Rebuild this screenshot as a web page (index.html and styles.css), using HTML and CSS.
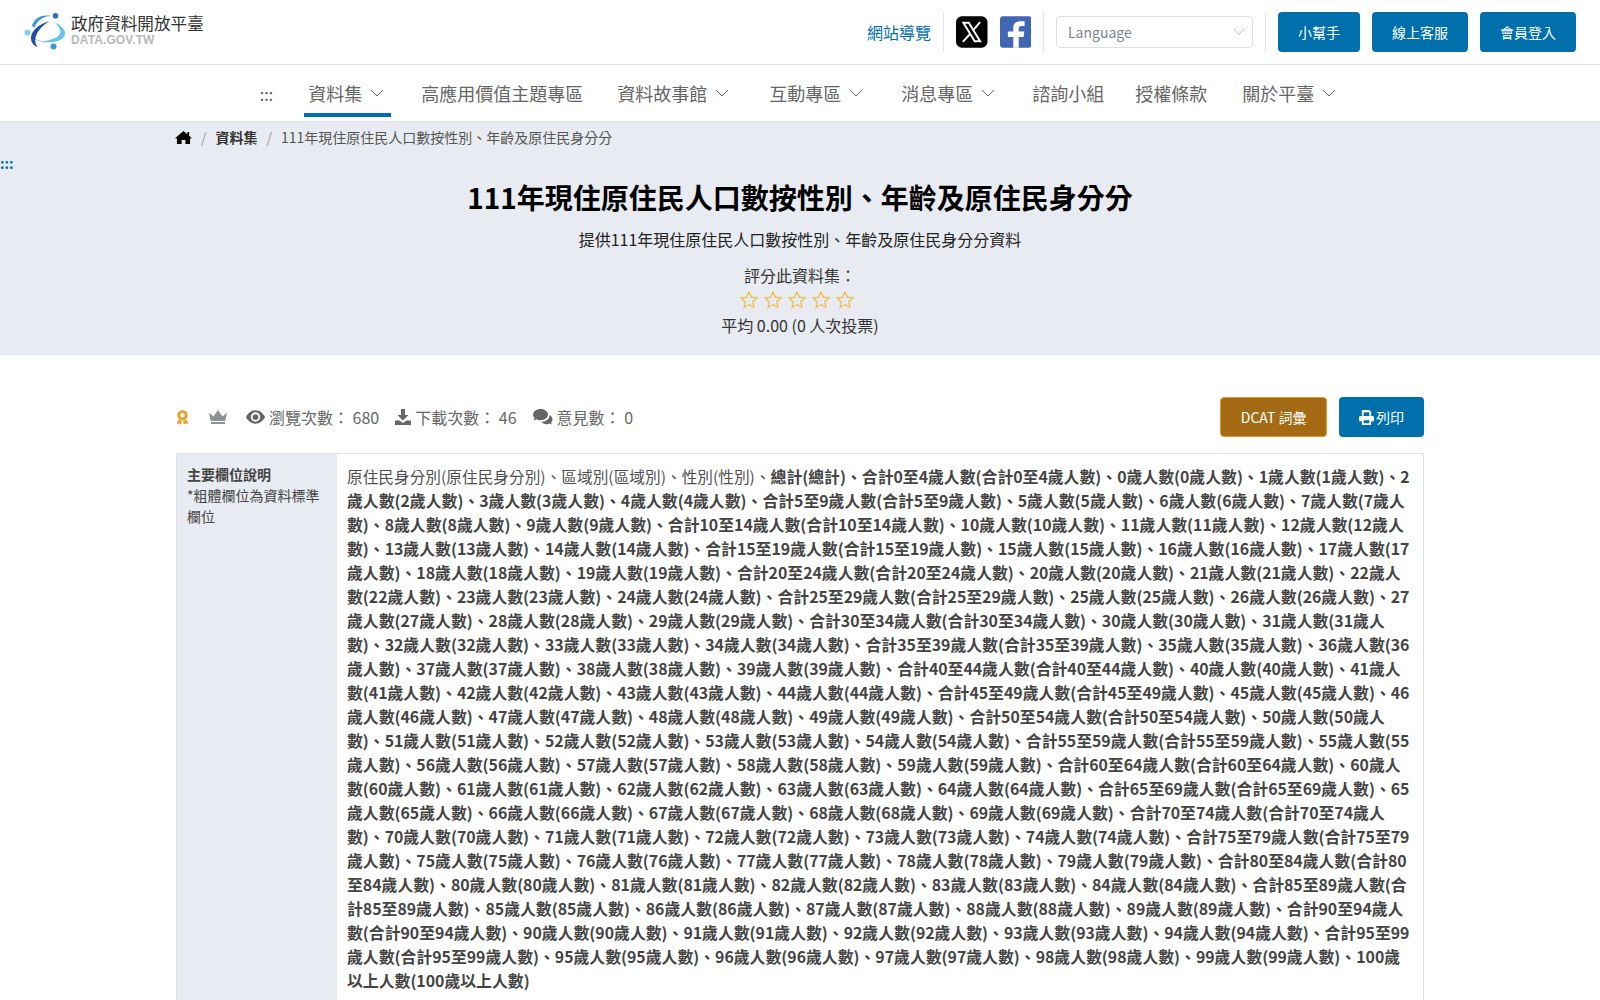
FILE: index.html

```html
<!DOCTYPE html>
<html lang="zh-Hant">
<head>
  <meta charset="UTF-8">
  <meta name="viewport" content="width=device-width, initial-scale=1.0">
  <title>111年現住原住民人口數按性別、年齡及原住民身分分</title>
  <link rel="stylesheet" href="styles.css">
</head>
<body>

  <header class="topbar">
    <a class="logo" href="#">
      <svg class="logo-mark" viewBox="0 0 42 38" width="42" height="38">
        <path d="M30 9C37 12 41.500 17 41 21 40 28 28 31 15 28.500 25 28 36 25 36.500 19 36.500 15 33.500 12 30 9z" fill="#62c6ea"/>
        <path d="M6 23c5 3.500 11 5 17 5.500-7 .5-13-1-17-5.500z" fill="#8ed8f0"/>
        <path d="M25.500 8C15 11 7 18 7 25c0 5 3 8 7 9-3-3-3.500-7-2-11C14 17 19 12 25.500 8z" fill="#1f4ea3"/>
        <path d="M8 13C10 6 16 1 27 3 21 3 14 6 10.500 14.500z" fill="#3a9ad9"/>
        <circle cx="31.500" cy="2.800" r="2.800" fill="#2f6fb8"/>
        <circle cx="3.500" cy="19.500" r="3" fill="#7fd0ee"/>
        <circle cx="29.500" cy="33.500" r="3" fill="#3a9ad9"/>
      </svg>
      <span class="logo-text">
        <span class="logo-name">政府資料開放平臺</span>
        <span class="logo-en">DATA.GOV.TW</span>
      </span>
    </a>
    <div class="top-tools">
      <a class="site-map" href="#">網站導覽</a>
      <span class="sep"></span>
      <a class="social" href="#">
        <svg viewBox="0 0 32 32" width="32" height="32">
          <rect width="32" height="32" rx="6" fill="#000"/>
          <path d="M7.500 6.500h5.500l11.500 19H19z" fill="none" stroke="#fff" stroke-width="2"/>
          <path d="M24.500 6 17 14.600M14.800 17.400 7 26" stroke="#fff" stroke-width="2" fill="none"/>
        </svg>
      </a>
      <a class="social" href="#">
        <svg viewBox="0 0 32 32" width="32" height="32">
          <rect width="32" height="32" rx="3" fill="#4267b2"/>
          <path d="M19 32V21h5l.7-5.500H19v-3c0-1.500.7-2.500 2.700-2.500H25V5.200C24.300 5.100 22.800 5 21.300 5 16.600 5 13.500 7.200 13.500 11.400v4.100H8V21h5.500v11z" fill="#fff"/>
        </svg>
      </a>
      <span class="sep"></span>
      <div class="lang">
        <span>Language</span>
        <svg viewBox="0 0 12 8" width="12" height="8"><path d="M1 1l5 5.500L11 1" fill="none" stroke="#b9bdc6" stroke-width="1"/></svg>
      </div>
      <span class="sep"></span>
      <a class="btn" href="#">小幫手</a>
      <a class="btn" href="#">線上客服</a>
      <a class="btn" href="#">會員登入</a>
    </div>
  </header>

  <nav class="mainnav">
    <span class="nav-dots">:::</span>
    <a class="nav-item has-sub active" href="#">資料集<svg class="chev" viewBox="0 0 14 8" width="14" height="8"><path d="M1 1l6 6 6-6" fill="none" stroke="#666" stroke-width="1"/></svg></a>
    <a class="nav-item" href="#">高應用價值主題專區</a>
    <a class="nav-item has-sub nav-story" href="#">資料故事館<svg class="chev" viewBox="0 0 14 8" width="14" height="8"><path d="M1 1l6 6 6-6" fill="none" stroke="#666" stroke-width="1"/></svg></a>
    <a class="nav-item has-sub" href="#">互動專區<svg class="chev" viewBox="0 0 14 8" width="14" height="8"><path d="M1 1l6 6 6-6" fill="none" stroke="#666" stroke-width="1"/></svg></a>
    <a class="nav-item has-sub nav-news" href="#">消息專區<svg class="chev" viewBox="0 0 14 8" width="14" height="8"><path d="M1 1l6 6 6-6" fill="none" stroke="#666" stroke-width="1"/></svg></a>
    <a class="nav-item nav-consult" href="#">諮詢小組</a>
    <a class="nav-item nav-terms" href="#">授權條款</a>
    <a class="nav-item has-sub" href="#">關於平臺<svg class="chev" viewBox="0 0 14 8" width="14" height="8"><path d="M1 1l6 6 6-6" fill="none" stroke="#666" stroke-width="1"/></svg></a>
  </nav>

  <section class="hero">
    <div class="crumbs">
      <svg class="crumb-home" viewBox="0 0 576 512" width="17" height="15"><path fill="#000" d="M288 32 8 272l24 28 32-27v207h160V340h128v140h160V273l32 27 24-28-88-75V64h-64v78z"/></svg>
      <span class="crumb-sep">/</span>
      <b>資料集</b>
      <span class="crumb-sep">/</span>
      <span>111年現住原住民人口數按性別、年齡及原住民身分分</span>
    </div>
    <div class="hero-dots">:::</div>
    <h1>111年現住原住民人口數按性別、年齡及原住民身分分</h1>
    <p class="hero-desc">提供111年現住原住民人口數按性別、年齡及原住民身分分資料</p>
    <p class="rate-label">評分此資料集：</p>
    <div class="stars">
      <svg viewBox="0 0 20 20" width="20" height="20"><path class="star" d="M10 2l2.400 5.200 5.600.7-4.100 3.900 1.100 5.600-5-2.800-5 2.800 1.100-5.600L2 7.900l5.600-.7z"/></svg>
      <svg viewBox="0 0 20 20" width="20" height="20"><path class="star" d="M10 2l2.400 5.200 5.600.7-4.100 3.900 1.100 5.600-5-2.800-5 2.800 1.100-5.600L2 7.900l5.600-.7z"/></svg>
      <svg viewBox="0 0 20 20" width="20" height="20"><path class="star" d="M10 2l2.400 5.200 5.600.7-4.100 3.900 1.100 5.600-5-2.800-5 2.800 1.100-5.600L2 7.900l5.600-.7z"/></svg>
      <svg viewBox="0 0 20 20" width="20" height="20"><path class="star" d="M10 2l2.400 5.200 5.600.7-4.100 3.900 1.100 5.600-5-2.800-5 2.800 1.100-5.600L2 7.900l5.600-.7z"/></svg>
      <svg viewBox="0 0 20 20" width="20" height="20"><path class="star" d="M10 2l2.400 5.200 5.600.7-4.100 3.900 1.100 5.600-5-2.800-5 2.800 1.100-5.600L2 7.900l5.600-.7z"/></svg>
    </div>
    <p class="rate-avg">平均 0.00 (0 人次投票)</p>
  </section>

  <main class="content">
    <div class="stats-row">
      <div class="stats">
        <svg class="badge" viewBox="0 0 13 15" width="13" height="15">
          <circle cx="6.500" cy="5.300" r="3.700" fill="none" stroke="#eb9f2e" stroke-width="3"/>
          <path d="M2.500 9.500 .5 14l3-.6 1.500 1.400 1-3zM10.500 9.500l2 4.500-3-.6L8 14.800l-1-3z" fill="#eb9f2e"/>
        </svg>
        <svg class="crown" viewBox="0 0 18 14" width="18" height="14">
          <path d="M0 2.500l4.500 4L9 0l4.500 6.500 4.500-4L16.300 11H1.700zM2 12h14v2H2z" fill="#8c909b"/>
        </svg>
        <span class="stat">
          <svg viewBox="0 0 20 14" width="19" height="14">
            <path d="M10 0C5.500 0 2 3 0 7c2 4 5.500 7 10 7s8-3 10-7c-2-4-5.500-7-10-7zm0 12A5 5 0 1 1 10 2a5 5 0 0 1 0 10z" fill="#666"/>
            <circle cx="10" cy="7" r="3" fill="#666"/>
          </svg>
          瀏覽次數： 680
        </span>
        <span class="stat">
          <svg viewBox="0 0 16 16" width="16" height="16">
            <path d="M6 0h4v6h3.500L8 11.500 2.500 6H6zM0 11.500h4.500L8 14l3.500-2.500H16V16H0z" fill="#666"/>
          </svg>
          下載次數： 46
        </span>
        <span class="stat">
          <svg viewBox="0 0 20 16" width="20" height="16">
            <path d="M7.500 0C3.400 0 0 2.500 0 5.600c0 1.300.6 2.500 1.600 3.500L.4 11.500l3-1.200c1.200.6 2.600.9 4.100.9 4.100 0 7.500-2.500 7.500-5.600S11.600 0 7.500 0z" fill="#666"/>
            <path d="M16.500 5.500c.1.300.1.600.1.900 0 3.700-3.800 6.200-8.200 6.300 1 1.500 3.100 2.500 5.300 2.500 1 0 2-.2 2.800-.6l2.500 1-.9-2.100c.9-.8 1.400-1.800 1.400-3 0-2-1.200-3.500-3-4.400z" fill="#666"/>
          </svg>
          意見數： 0
        </span>
      </div>
      <div class="stats-actions">
        <a class="btn btn-dcat" href="#">DCAT 詞彙</a>
        <a class="btn btn-print" href="#">
          <svg viewBox="0 0 16 16" width="15" height="15">
            <path d="M3 0h8l2 2v4h-2V2.500H5V6H3zM1.500 6.500h13c.8 0 1.500.7 1.500 1.500v4h-3v4H3v-4H0V8c0-.8.700-1.500 1.500-1.500zM5 11v3h6v-3z" fill="#fff"/>
          </svg>列印
        </a>
      </div>
    </div>

    <div class="info-table">
      <div class="info-head">
        <b>主要欄位說明</b>
        <span>*粗體欄位為資料標準欄位</span>
      </div>
      <div class="info-body">原住民身分別(原住民身分別)、區域別(區域別)、性別(性別)、<b>總計(總計)、合計0至4歲人數(合計0至4歲人數)、0歲人數(0歲人數)、1歲人數(1歲人數)、2歲人數(2歲人數)、3歲人數(3歲人數)、4歲人數(4歲人數)、合計5至9歲人數(合計5至9歲人數)、5歲人數(5歲人數)、6歲人數(6歲人數)、7歲人數(7歲人數)、8歲人數(8歲人數)、9歲人數(9歲人數)、合計10至14歲人數(合計10至14歲人數)、10歲人數(10歲人數)、11歲人數(11歲人數)、12歲人數(12歲人數)、13歲人數(13歲人數)、14歲人數(14歲人數)、合計15至19歲人數(合計15至19歲人數)、15歲人數(15歲人數)、16歲人數(16歲人數)、17歲人數(17歲人數)、18歲人數(18歲人數)、19歲人數(19歲人數)、合計20至24歲人數(合計20至24歲人數)、20歲人數(20歲人數)、21歲人數(21歲人數)、22歲人數(22歲人數)、23歲人數(23歲人數)、24歲人數(24歲人數)、合計25至29歲人數(合計25至29歲人數)、25歲人數(25歲人數)、26歲人數(26歲人數)、27歲人數(27歲人數)、28歲人數(28歲人數)、29歲人數(29歲人數)、合計30至34歲人數(合計30至34歲人數)、30歲人數(30歲人數)、31歲人數(31歲人數)、32歲人數(32歲人數)、33歲人數(33歲人數)、34歲人數(34歲人數)、合計35至39歲人數(合計35至39歲人數)、35歲人數(35歲人數)、36歲人數(36歲人數)、37歲人數(37歲人數)、38歲人數(38歲人數)、39歲人數(39歲人數)、合計40至44歲人數(合計40至44歲人數)、40歲人數(40歲人數)、41歲人數(41歲人數)、42歲人數(42歲人數)、43歲人數(43歲人數)、44歲人數(44歲人數)、合計45至49歲人數(合計45至49歲人數)、45歲人數(45歲人數)、46歲人數(46歲人數)、47歲人數(47歲人數)、48歲人數(48歲人數)、49歲人數(49歲人數)、合計50至54歲人數(合計50至54歲人數)、50歲人數(50歲人數)、51歲人數(51歲人數)、52歲人數(52歲人數)、53歲人數(53歲人數)、54歲人數(54歲人數)、合計55至59歲人數(合計55至59歲人數)、55歲人數(55歲人數)、56歲人數(56歲人數)、57歲人數(57歲人數)、58歲人數(58歲人數)、59歲人數(59歲人數)、合計60至64歲人數(合計60至64歲人數)、60歲人數(60歲人數)、61歲人數(61歲人數)、62歲人數(62歲人數)、63歲人數(63歲人數)、64歲人數(64歲人數)、合計65至69歲人數(合計65至69歲人數)、65歲人數(65歲人數)、66歲人數(66歲人數)、67歲人數(67歲人數)、68歲人數(68歲人數)、69歲人數(69歲人數)、合計70至74歲人數(合計70至74歲人數)、70歲人數(70歲人數)、71歲人數(71歲人數)、72歲人數(72歲人數)、73歲人數(73歲人數)、74歲人數(74歲人數)、合計75至79歲人數(合計75至79歲人數)、75歲人數(75歲人數)、76歲人數(76歲人數)、77歲人數(77歲人數)、78歲人數(78歲人數)、79歲人數(79歲人數)、合計80至84歲人數(合計80至84歲人數)、80歲人數(80歲人數)、81歲人數(81歲人數)、82歲人數(82歲人數)、83歲人數(83歲人數)、84歲人數(84歲人數)、合計85至89歲人數(合計85至89歲人數)、85歲人數(85歲人數)、86歲人數(86歲人數)、87歲人數(87歲人數)、88歲人數(88歲人數)、89歲人數(89歲人數)、合計90至94歲人數(合計90至94歲人數)、90歲人數(90歲人數)、91歲人數(91歲人數)、92歲人數(92歲人數)、93歲人數(93歲人數)、94歲人數(94歲人數)、合計95至99歲人數(合計95至99歲人數)、95歲人數(95歲人數)、96歲人數(96歲人數)、97歲人數(97歲人數)、98歲人數(98歲人數)、99歲人數(99歲人數)、100歲以上人數(100歲以上人數)</b></div>
    </div>
  </main>

</body>
</html>
```

FILE: styles.css

```css
body {
  margin: 0;
  font-family: "Noto Sans CJK TC", "Noto Sans", sans-serif;
  font-size: 16px;
  color: #333;
  background: #fff;
}
a {
  text-decoration: none;
  color: inherit;
}
p {
  margin: 0;
}

.topbar {
  display: flex;
  align-items: center;
  justify-content: space-between;
  height: 64px;
  padding: 0 24px;
  border-bottom: 1px solid #dcdfe8;
}
.logo {
  display: flex;
  align-items: center;
  gap: 5px;
  margin-bottom: 3px;
}
.logo-mark {
  margin-top: 2px;
}
.logo-text {
  display: flex;
  flex-direction: column;
}
.logo-name {
  font-size: 16.600px;
  line-height: 18px;
  color: #333;
}
.logo-en {
  margin-top: 1px;
  font-family: "Liberation Sans", sans-serif;
  font-weight: bold;
  font-size: 12px;
  line-height: 14px;
  letter-spacing: 0.100px;
  color: #b9b9b9;
}
.top-tools {
  display: flex;
  align-items: center;
  gap: 12px;
}
.top-tools .btn,
.site-map {
  padding-bottom: 1px;
}
.site-map {
  color: #0070ad;
}
.sep {
  width: 1px;
  height: 40px;
  background: #e2e4ea;
}
.social {
  display: flex;
  width: 31.500px;
}
.lang {
  display: flex;
  align-items: center;
  justify-content: space-between;
  box-sizing: border-box;
  width: 197px;
  height: 32px;
  padding: 0 7px 0 11px;
  border: 1px solid #dcdfe8;
  border-radius: 4px;
  font-size: 14px;
  color: #808590;
}
.btn {
  display: inline-flex;
  align-items: center;
  justify-content: center;
  box-sizing: border-box;
  height: 40px;
  padding: 0 20px;
  border-radius: 4px;
  background: #0070ad;
  color: #fff;
  font-size: 14px;
}

.mainnav {
  display: flex;
  justify-content: center;
  align-items: stretch;
  gap: 26px;
  height: 56px;
  padding-left: 4px;
  border-bottom: 1px solid #dcdfe8;
}
.nav-dots {
  align-self: center;
  margin: 2px 5px 0 0;
  color: #555;
  font-size: 16px;
}
.nav-item {
  display: flex;
  align-items: center;
  gap: 8px;
  padding: 8px 4px 0;
  margin-bottom: 4px;
  font-size: 18px;
  color: #666;
  border-bottom: 4px solid transparent;
}
.nav-item.has-sub {
  padding-right: 8px;
}
.nav-item.active {
  padding-right: 7px;
  border-bottom-color: #0070ad;
}
.nav-item.nav-story {
  padding-right: 10px;
}
.nav-item.nav-news {
  padding-right: 7px;
}
.nav-consult {
  margin-right: -3px;
}
.nav-terms {
  margin-right: 1px;
}

.hero {
  height: 233px;
  background: #e8ebf1;
  text-align: center;
}
.crumbs {
  display: flex;
  align-items: center;
  gap: 9px;
  width: 1248px;
  margin: 0 auto;
  height: 30px;
  font-size: 14px;
  color: #555;
}
.crumb-home {
  margin-left: -1px;
}
.crumbs b {
  color: #333;
}
.crumb-sep {
  color: #999;
}
.hero-dots {
  text-align: left;
  height: 21px;
  line-height: 23px;
  font-size: 14px;
  font-weight: bold;
  color: #0070ad;
}
.hero h1 {
  margin: 3px 0 9px;
  font-size: 28px;
  line-height: 42px;
  color: #000;
  font-weight: bold;
}
.hero-desc,
.rate-label,
.rate-avg {
  line-height: 24px;
}
.hero-desc {
  margin-bottom: 12px;
  color: #222;
}
.stars {
  display: flex;
  justify-content: center;
  gap: 4px;
  height: 24px;
  align-items: center;
  padding-right: 6px;
  margin-top: 1px;
  margin-bottom: 1px;
}
.star {
  fill: none;
  stroke: #f5b93c;
  stroke-width: 1.200;
}

.content {
  width: 1248px;
  margin: 0 auto;
}
.stats-row {
  display: flex;
  justify-content: space-between;
  align-items: center;
  margin-top: 42px;
  height: 40px;
}
.stats {
  display: flex;
  align-items: center;
  color: #666;
}
.badge {
  margin-right: 20px;
}
.crown {
  margin-right: 19px;
}
.stat {
  display: flex;
  align-items: center;
  gap: 4px;
  margin-right: 16px;
}
.stats-actions {
  display: flex;
  gap: 12px;
}
.btn-dcat {
  background: #a46a14;
  border: 1px solid #e09a2e;
  padding: 0 19.500px;
}
.btn-print {
  gap: 2px;
}

.info-table {
  display: flex;
  margin-top: 16px;
  border: 1px solid #dcdfe8;
  border-bottom: 0;
}
.info-head {
  box-sizing: border-box;
  width: 160px;
  flex-shrink: 0;
  padding: 10px;
  background: #e8ebf1;
  font-size: 14px;
  line-height: 21px;
  color: #444;
}
.info-head b,
.info-head span {
  display: block;
}
.info-body {
  padding: 11px 9px 30px 10px;
  font-size: 15.680px;
  line-height: 24px;
  color: #505050;
}
.info-body b {
  font-size: 15.850px;
  color: #444;
}
```
